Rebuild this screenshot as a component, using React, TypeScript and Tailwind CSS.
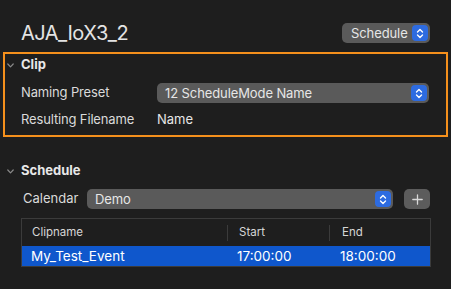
import React from 'react';

function Stepper() {
    return (
        <div className="w-[16px] h-[16px] rounded-[4px] bg-[#2d6be0] flex items-center justify-center">
            <svg width="8" height="11" viewBox="0 0 8 11" fill="none" stroke="#ffffff" strokeWidth="1.4" strokeLinecap="round" strokeLinejoin="round">
                <path d="M1.5 4 L4 1.5 L6.5 4" />
                <path d="M1.5 7 L4 9.5 L6.5 7" />
            </svg>
        </div>
    );
}

function Chevron() {
    return (
        <svg width="7" height="5" viewBox="0 0 7 5" fill="none" stroke="#8a8a8a" strokeWidth="1.2" strokeLinecap="round" strokeLinejoin="round">
            <path d="M0.8 1 L3.5 3.8 L6.2 1" />
        </svg>
    );
}

function Popup({ label, className }: { label: string; className: string }) {
    return (
        <div className={`h-[20px] rounded-[5px] bg-[#5a5a5a] flex items-center justify-between pr-[2px] ${className}`}>
            <span className="text-[13px] text-[#e6e6e6] leading-none tracking-[-0.1px]">{label}</span>
            <Stepper />
        </div>
    );
}

export default function App() {
    return (
        <div className="w-[451px] h-[289px] bg-[#1e1e1e] overflow-hidden flex flex-col font-['Inter',sans-serif] text-[#e2e2e2]">
            {/* Title */}
            <div className="mt-[23px] h-[20px] flex items-center justify-between pl-[21px] pr-[21px]">
                <span className="text-[20px] leading-none text-[#e4e4e4] tracking-[-0.5px]">AJA_IoX3_2</span>
                <Popup label="Schedule" className="w-[88px] pl-[9px]" />
            </div>

            {/* Clip (highlighted) */}
            <div className="mt-[9px] mx-[3px] h-[85px] border-2 border-[#f5901c] flex flex-col">
                <div className="h-[22px] flex items-center pl-[2px] gap-[7px]">
                    <Chevron />
                    <span className="text-[13px] font-bold text-[#e8e8e8]">Clip</span>
                </div>
                <div className="mt-[7px] h-[20px] flex items-center pl-[16px] pr-[17px]">
                    <span className="w-[136px] text-[13px] text-[#dadada] tracking-[-0.15px]">Naming Preset</span>
                    <Popup label="12 ScheduleMode Name" className="flex-1 pl-[8px]" />
                </div>
                <div className="mt-[7px] h-[20px] flex items-center pl-[16px]">
                    <span className="w-[136px] text-[13px] text-[#dadada] tracking-[-0.15px]">Resulting Filename</span>
                    <span className="text-[13px] text-[#e6e6e6]">Name</span>
                </div>
            </div>

            {/* Schedule */}
            <div className="mt-[24px] h-[20px] flex items-center pl-[7px] gap-[7px]">
                <Chevron />
                <span className="text-[13px] font-bold text-[#e8e8e8]">Schedule</span>
            </div>
            <div className="mt-[8px] h-[20px] flex items-center pl-[23px] pr-[21px]">
                <span className="w-[64px] text-[13px] text-[#dadada]">Calendar</span>
                <Popup label="Demo" className="w-[306px] pl-[8px]" />
                <div className="ml-[11px] w-[26px] h-[20px] rounded-[5px] bg-[#5c5c5c] flex items-center justify-center">
                    <svg width="11" height="11" viewBox="0 0 11 11" stroke="#d8d8d8" strokeWidth="1.3" strokeLinecap="round">
                        <path d="M5.5 0.8 V10.2 M0.8 5.5 H10.2" />
                    </svg>
                </div>
            </div>

            {/* Table */}
            <div className="mt-[9px] ml-[21px] w-[410px] border border-[#3b3b3b] bg-[#1e1e1e]">
                <div className="h-[27px] grid grid-cols-[205px_102px_1fr] items-center text-[11.5px] text-[#d6d6d6]">
                    <div className="pl-[10px]">Clipname</div>
                    <div className="h-[16px] border-l border-[#3b3b3b] pl-[11px] flex items-center">Start</div>
                    <div className="h-[16px] border-l border-[#3b3b3b] pl-[12px] flex items-center">End</div>
                </div>
                <div className="h-[20px] bg-[#0f57cc] grid grid-cols-[205px_102px_1fr] items-center text-[13.5px] text-white">
                    <div className="pl-[9px]">My_Test_Event</div>
                    <div className="pl-[10px]">17:00:00</div>
                    <div className="pl-[11px]">18:00:00</div>
                </div>
            </div>
        </div>
    );
}
